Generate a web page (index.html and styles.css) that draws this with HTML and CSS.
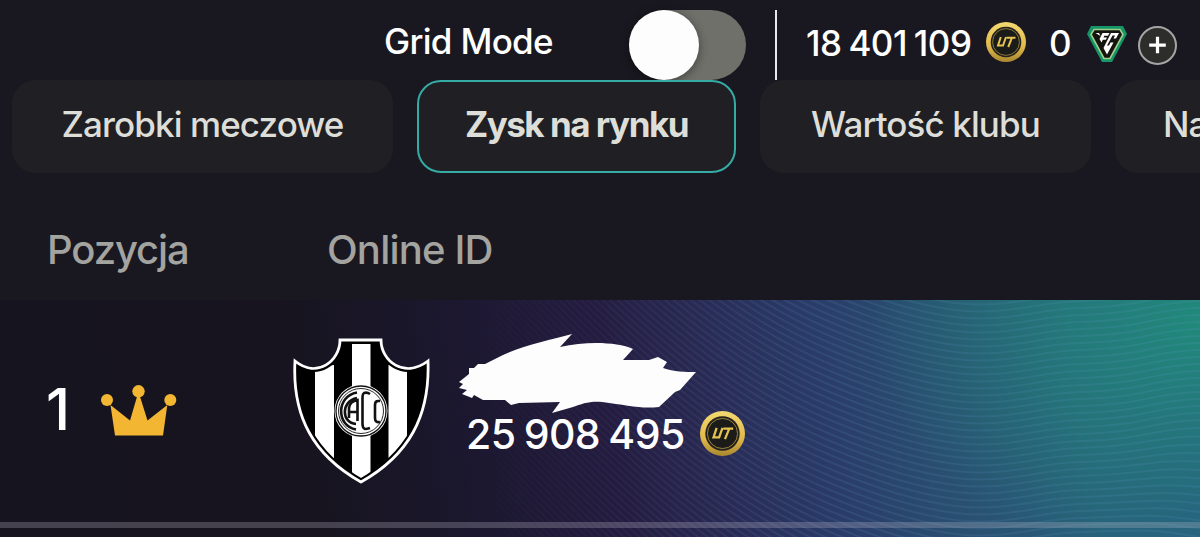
FILE: index.html
```
<!DOCTYPE html>
<html lang="pl">
  <head>
    <meta charset="UTF-8" />
    <meta name="viewport" content="width=device-width, initial-scale=1.0" />
    <title>Zysk na rynku</title>
    <link rel="stylesheet" href="styles.css">
  </head>
  <body>
    <!-- shared coin icon -->
    <svg class="defs" width="0" height="0">
      <defs>
        <linearGradient id="gold" x1="0" y1="0" x2="0" y2="1">
          <stop offset="0" stop-color="#f3d970" />
          <stop offset="0.6" stop-color="#e2b94b" />
          <stop offset="1" stop-color="#a9872f" />
        </linearGradient>
        <symbol id="coin" viewBox="0 0 40 40">
          <circle cx="20" cy="20" r="20" fill="url(#gold)" />
          <circle cx="20" cy="20" r="15.3" fill="#22211c" />
          <circle cx="20" cy="20" r="13.4" fill="#1b1b19" stroke="#a58b3d" stroke-width="0.8" />
          <path d="M14.8 15 L12 23.5 H17 L20 15 M20.8 15.7 H29.5 M26 15.7 L22.2 25" fill="none" stroke="#e5c351" stroke-width="2" />
        </symbol>
      </defs>
    </svg>

    <header class="topbar">
      <span class="grid-label">Grid Mode</span>
      <div class="toggle"><div class="knob"></div></div>
      <div class="wallet">
        <span class="coins">18 401 109</span>
        <svg class="coin"><use href="#coin" /></svg>
        <span class="points">0</span>
        <svg class="fc" viewBox="0 0 40 36">
          <path d="M4 0 H36 L40 8 L25 36 H15 L0 8 Z" fill="#159568" />
          <path d="M7 3.5 H33 L36 8.5 L23 32.5 H17 L4 8.5 Z" fill="#16140f" stroke="#9ed08b" stroke-width="1.6" />
          <path d="M8.5 7 H12 L13.5 10 Z M15.5 7 H22.5 L21 9.8 H17.3 L16.5 11.5 H20 L18.8 13.8 H15.8 L14.5 16.5 L12.5 13 Z" fill="#fff" />
          <path d="M24 7 H32 L29 12.5 H26.5 L28 9.600 H25.500 L20 19.500 H22 L23.500 16.500 H26.500 L20 28.500 L16.500 22 Z" fill="#fff" />
        </svg>
        <button class="add" aria-label="Dodaj">
          <svg viewBox="0 0 38 38"><path d="M19 9.5 V27.5 M10 18.5 H28" stroke="#fff" stroke-width="3.5" /></svg>
        </button>
      </div>
    </header>

    <nav class="tabs">
      <a class="tab tab-earnings">Zarobki meczowe</a>
      <a class="tab tab-profit active">Zysk na rynku</a>
      <a class="tab tab-value">Wartość klubu</a>
      <a class="tab tab-last">Na</a>
    </nav>

    <div class="columns">
      <span class="col-pos">Pozycja</span>
      <span class="col-id">Online ID</span>
    </div>

    <main class="row">
      <svg class="waves" id="waves" viewBox="0 0 1200 237"></svg>
      <span class="rank">1</span>
      <svg class="crown" viewBox="0 0 76 52">
        <g fill="#f2b632">
          <circle cx="6" cy="15" r="6" />
          <circle cx="37.5" cy="6.3" r="6.2" />
          <circle cx="69.3" cy="15" r="6" />
          <path d="M9.5 20 L29 35.5 L36.5 10 H38.5 L46.5 35.5 L66.3 20 L62 50.5 H14 Z" />
        </g>
      </svg>
      <svg class="crest" viewBox="0 0 138 148">
        <clipPath id="shield">
          <path d="M48 3 H89 C89 24 112 42 136 24 C138 79 117 118 69 145 C21 118 0 79 3 24 C25 42 48 24 48 3 Z" />
        </clipPath>
        <rect width="138" height="148" fill="#000" clip-path="url(#shield)" />
        <g clip-path="url(#shield)" fill="#fff">
          <path d="M23 30 L42 28 V125 L23 104 Z M60 7 H78.5 V142 H60 Z M96.5 28 L115 30 V104 L96.5 125 Z" />
        </g>
        <path d="M48 3 H89 C89 24 112 42 136 24 C138 79 117 118 69 145 C21 118 0 79 3 24 C25 42 48 24 48 3 Z" fill="none" stroke="#000" stroke-width="7" clip-path="url(#shield)" />
        <path d="M48 3 H89 C89 24 112 42 136 24 C138 79 117 118 69 145 C21 118 0 79 3 24 C25 42 48 24 48 3 Z" fill="none" stroke="#fff" stroke-width="2.8" />
        <circle cx="69" cy="74" r="26.5" fill="#fff" />
        <circle cx="69" cy="74" r="25" fill="none" stroke="#111" stroke-width="1.3" />
        <circle cx="69" cy="74" r="22.5" fill="none" stroke="#111" stroke-width="0.9" />
        <!-- club monogram -->
        <g fill="none" stroke="#111" stroke-width="2.6">
          <path d="M65 55.500 C44 59 44 89 64 92.500" />
          <path d="M65 61 C49 64 49 86 64 87" />
          <path d="M57 81 V71 C57.500 66 60 64 65.500 63 V84 M57 75 H65" />
          <path d="M78 57 Q75 55 72 56 Q70.500 57 70.500 60 V87 Q70.500 91 73 92 Q75 92 78 91" />
          <path d="M88 64 H86 Q83 64 83 68 V81 Q83 86 88 85" />
        </g>
      </svg>
      <div class="player">
        <svg class="scribble" viewBox="0 0 238 80">
          <path d="M10 34 L15 34 L19 30 L26 30 L40 23 L44 21 C65 11 92 6 113 0 L101 13 C128 7 158 8 174 15 L164 26 H190 L199 23 L208 28 L204 34 C215 38 226 38 237 38 L221 56 L216 58 L200 73 C181 75 168 71 143 68 C130 67 123 70 114 73 L93 79 L101 68 L60 69 L52 71 L46 66 L24 66 L15 61 L13 64 L3 60 L8 56 L0 54 L4 50 L0 48 L10 40 Z" fill="#fdfdfd" />
        </svg>
        <div class="score">
          <span>25 908 495</span>
          <svg class="coin"><use href="#coin" /></svg>
        </div>
      </div>
      <div class="scrollbar"></div>
    </main>

    <script>
      // thin wavy contour lines over the row background
      const waves = document.getElementById("waves");
      for (let y = -240; y < 370; y += 7) {
        const path = document.createElementNS("http://www.w3.org/2000/svg", "path");
        // lower lines bend down again towards the right edge
        const bend = Math.max(-14, y / 5);
        path.setAttribute(
          "d",
          `M420 ${y - 165} C560 ${y - 30} 680 ${y + 115} 830 ${y + 178} S1010 ${y + 208} 1080 ${y + 206} S1150 ${y + 200 + bend / 2} 1200 ${y + 206 + bend}`
        );
        waves.appendChild(path);
      }
    </script>
  </body>
</html>
```
FILE: styles.css
```
* {
  box-sizing: border-box;
}

body {
  margin: 0;
  height: 537px;
  overflow: hidden;
  background-color: #191820;
  color: #fff;
  font-family: Inter, "Liberation Sans", sans-serif;
}
.defs {
  position: absolute;
}
svg {
  display: block;
  flex: none;
}

.topbar {
  display: flex;
  height: 80px;
  padding: 10px 0 0 384px;
}
.grid-label {
  width: 245px;
  font-size: 35px;
  font-weight: 500;
  line-height: 63px;
  letter-spacing: -0.7px;
  white-space: nowrap;
}
.toggle {
  width: 117px;
  height: 70px;
  border-radius: 35px;
  background-color: #70706b;
}
.knob {
  width: 70px;
  height: 70px;
  border-radius: 50%;
  background-color: #fdfdfd;
  box-shadow: 0 2px 10px rgba(0, 0, 0, 0.45);
}
.wallet {
  display: flex;
  height: 70px;
  margin-left: 29px;
  padding-left: 29px;
  border-left: 2px solid #e8e8ea;
  font-size: 35px;
  font-weight: 500;
  line-height: 66px;
  white-space: nowrap;
}
.coins {
  width: 180px;
  letter-spacing: -0.5px;
  word-spacing: -2px;
}
.wallet .coin {
  width: 40px;
  height: 40px;
  margin-top: 12px;
}
.points {
  width: 38px;
  margin-left: 23px;
}
.fc {
  width: 40px;
  height: 36px;
  margin-top: 16px;
}
.add {
  width: 39px;
  height: 39px;
  margin: 16px 0 0 11px;
  padding: 0;
  border: 2px solid #a5a5a5;
  border-radius: 50%;
  background-color: #2d2d2b;
}

.tabs {
  display: flex;
  gap: 24px;
  padding-left: 12px;
}
.tab {
  flex: none;
  height: 93px;
  border-radius: 24px;
  background-color: #202024;
  color: #deded9;
  font-size: 35px;
  font-weight: 500;
  line-height: 89px;
  letter-spacing: -0.9px;
  text-align: center;
  white-space: nowrap;
}
.tab-earnings {
  width: 381px;
}
.tab-profit {
  width: 319px;
}
.tab-value {
  width: 331px;
}
.tab-last {
  width: 85px;
  padding-left: 48px;
  border-radius: 24px 0 0 24px;
  text-align: left;
}
.tab.active {
  border: 2px solid #35aba5;
  font-weight: 700;
  line-height: 85px;
  letter-spacing: -1.5px;
}

.columns {
  display: flex;
  height: 127px;
  padding-left: 47px;
  color: #a3a3a0;
  font-size: 40px;
  font-weight: 500;
  line-height: 154px;
  letter-spacing: -1.1px;
}
.col-pos {
  width: 280px;
}
.col-id {
  letter-spacing: -0.8px;
}

.row {
  position: relative;
  display: flex;
  height: 237px;
  background:
    radial-gradient(ellipse 330px 250px at 1200px 20px, rgba(32, 145, 122, 0.85), rgba(32, 140, 122, 0)),
    linear-gradient(81deg, #16141f 0, #17141f 25%, #1b172d 38%, #251c40 51%, #292851 58%, #2a3b68 68%, #294e70 77%, #285f7a 89%, #285c80 100%);
}
.waves {
  position: absolute;
  z-index: 0;
  width: 1200px;
  height: 237px;
  fill: none;
  stroke: rgba(110, 165, 210, 0.13);
  stroke-width: 2;
  mask-image: linear-gradient(90deg, transparent 38%, #000 65%);
}
.rank,
.crown,
.crest,
.player {
  position: relative;
  z-index: 1;
}
.rank {
  width: 55px;
  margin-left: 46px;
  font-size: 58px;
  font-weight: 500;
  line-height: 218px;
}
.crown {
  width: 76px;
  height: 52px;
  margin-top: 85px;
}
.crest {
  width: 138px;
  height: 148px;
  margin: 37px 0 0 115px;
}
.player {
  margin: 34px 0 0 29px;
}
.scribble {
  width: 238px;
  height: 80px;
}
.score {
  display: flex;
  padding-left: 7px;
  font-size: 41px;
  font-weight: 500;
  line-height: 40px;
  letter-spacing: -0.6px;
  word-spacing: -2px;
  white-space: nowrap;
}
.score span {
  width: 234px;
}
.score .coin {
  width: 45px;
  height: 45px;
  margin-top: -3px;
}
.scrollbar {
  position: absolute;
  top: 222px;
  left: 0;
  width: 100%;
  height: 6px;
  background-color: rgba(190, 185, 200, 0.28);
}
```
